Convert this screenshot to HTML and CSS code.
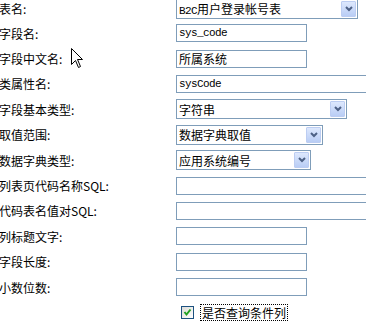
FILE: index.html
```html
<!DOCTYPE html>
<html lang="zh">
<head>
    <meta charset="UTF-8">
    <title>字段编辑</title>
    <link rel="stylesheet" href="styles.css">
</head>
<body>
    <div class="form">
        <div class="row row-first">
            <span class="label">表名:</span>
            <div class="select w-table">
                <span class="select-text"><span class="mono">B2C</span>用户登录帐号表</span>
                <span class="select-btn"><svg width="8" height="6" viewBox="0 0 8 6"><polyline points="1,1 4,4 7,1" fill="none" stroke="#4d6185" stroke-width="2"/></svg></span>
            </div>
        </div>
        <div class="row">
            <span class="label">字段名:</span>
            <input class="field w-short mono" type="text" value="sys_code">
        </div>
        <div class="row">
            <span class="label">字段中文名:</span>
            <input class="field w-short" type="text" value="所属系统">
        </div>
        <div class="row">
            <span class="label">类属性名:</span>
            <input class="field w-long mono" type="text" value="sysCode">
        </div>
        <div class="row">
            <span class="label">字段基本类型:</span>
            <div class="select w-type">
                <span class="select-text">字符串</span>
                <span class="select-btn"><svg width="8" height="6" viewBox="0 0 8 6"><polyline points="1,1 4,4 7,1" fill="none" stroke="#4d6185" stroke-width="2"/></svg></span>
            </div>
        </div>
        <div class="row">
            <span class="label">取值范围:</span>
            <div class="select w-range">
                <span class="select-text">数据字典取值</span>
                <span class="select-btn"><svg width="8" height="6" viewBox="0 0 8 6"><polyline points="1,1 4,4 7,1" fill="none" stroke="#4d6185" stroke-width="2"/></svg></span>
            </div>
        </div>
        <div class="row">
            <span class="label">数据字典类型:</span>
            <div class="select w-dict">
                <span class="select-text">应用系统编号</span>
                <span class="select-btn"><svg width="8" height="6" viewBox="0 0 8 6"><polyline points="1,1 4,4 7,1" fill="none" stroke="#4d6185" stroke-width="2"/></svg></span>
            </div>
        </div>
        <div class="row">
            <span class="label">列表页代码名称SQL:</span>
            <input class="field w-long" type="text" value="">
        </div>
        <div class="row">
            <span class="label">代码表名值对SQL:</span>
            <input class="field w-long" type="text" value="">
        </div>
        <div class="row">
            <span class="label">列标题文字:</span>
            <input class="field w-short" type="text" value="">
        </div>
        <div class="row">
            <span class="label">字段长度:</span>
            <input class="field w-short" type="text" value="">
        </div>
        <div class="row">
            <span class="label">小数位数:</span>
            <input class="field w-short" type="text" value="">
        </div>
        <div class="row">
            <span class="label"></span>
            <span class="check"><svg width="11" height="11" viewBox="0 0 11 11"><polyline points="2.5,5 4.5,7.5 8.5,2.5" fill="none" stroke="#21a121" stroke-width="2"/></svg></span>
            <span class="check-label">是否查询条件列</span>
        </div>
    </div>

    <svg class="cursor" width="13" height="21" viewBox="0 0 13 21">
        <path d="M0.5,0.5 L0.5,16.5 L4.5,12.5 L7.5,19.5 L9.5,18.5 L6.5,11.5 L11.5,11.5 Z" fill="#fff" stroke="#000" stroke-width="1"/>
    </svg>
</body>
</html>
```

FILE: styles.css
```css
body {
    margin: 0;
    font-family: "Noto Sans CJK SC", sans-serif;
    font-size: 12px;
    color: #000;
    background: #fff;
    overflow: hidden;
}
.form {
    margin-top: -3px;
}
.row {
    display: flex;
    align-items: center;
    height: 25.4px;
}
.row-first {
    height: 23.5px;
}
.label {
    flex: none;
    width: 177px;
    margin-left: -1px;
    white-space: nowrap;
}
.mono {
    font-family: "Liberation Mono", monospace;
    font-size: 11px;
    letter-spacing: -0.6px;
}
.field {
    flex: none;
    box-sizing: border-box;
    height: 18px;
    margin: 0;
    padding: 0 2px;
    border: 1px solid #7f9db9;
    background: #fff;
    font-family: "Noto Sans CJK SC", sans-serif;
    font-size: 12px;
    color: #000;
    outline: none;
}
.field.mono {
    font-family: "Liberation Mono", monospace;
    font-size: 11px;
}
.w-short { width: 131px; }
.w-long { width: 190px; border-right: none; }
.w-table { width: 182px; }
.w-type { width: 171px; }
.w-range { width: 147px; }
.w-dict { width: 135px; }
.select {
    flex: none;
    display: flex;
    align-items: center;
    box-sizing: border-box;
    height: 20px;
    padding-left: 2px;
    border: 1px solid #7f9db9;
    background: #fff;
}
.select-text {
    flex: 1;
    white-space: nowrap;
    overflow: hidden;
}
.select-btn {
    display: flex;
    align-items: center;
    justify-content: center;
    box-sizing: border-box;
    width: 15px;
    height: 16px;
    margin-right: 1px;
    border: 1px solid #bccdf2;
    border-radius: 1px;
    background: linear-gradient(#dde8fd, #b9cdf5);
}
.check {
    display: flex;
    align-items: center;
    justify-content: center;
    box-sizing: border-box;
    width: 13px;
    height: 13px;
    margin-left: 5px;
    border: 1px solid #1c5180;
    background: linear-gradient(135deg, #dcdcd7, #fff);
}
.check-label {
    margin-left: 7px;
    padding: 0 1px;
    outline: 1px dotted #000;
    line-height: 15px;
}
.cursor {
    position: absolute;
    left: 71px;
    top: 48px;
}
```
